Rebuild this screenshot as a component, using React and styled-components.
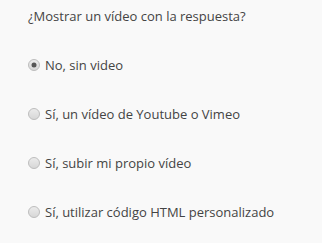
import React, { useState } from 'react'
import styled, { createGlobalStyle } from 'styled-components'

const Global = createGlobalStyle`
  html, body {
    margin: 0;
    padding: 0;
    background: #f9f9f9;
  }
  body {
    font-family: "Open Sans", "Liberation Sans", sans-serif;
  }
`

const Panel = styled.div`
  width: 322px;
  height: 243px;
  box-sizing: border-box;
  padding: 7px 0 0 28px;
  background: #f9f9f9;
  color: #444;
  font-size: 13px;
`

const Question = styled.div`
  line-height: 18px;
  height: 18px;
`

const Options = styled.div`
  display: flex;
  flex-direction: column;
  gap: 31px;
  margin-top: 31px;
`

const Option = styled.label`
  display: flex;
  align-items: center;
  gap: 5px;
  height: 18px;
  line-height: 18px;
  cursor: pointer;
`

const Radio = ({ checked }) => (
  <svg width="12" height="12" viewBox="0 0 12 12" style={{ flex: 'none', marginTop: '-1px' }}>
    <defs>
      <linearGradient id="rg" x1="0" y1="0" x2="0" y2="1">
        <stop offset="0" stopColor="#ececec" />
        <stop offset="1" stopColor="#d6d6d6" />
      </linearGradient>
    </defs>
    <circle cx="6" cy="6" r="5.5" fill="url(#rg)" stroke="#bdbdbd" strokeWidth="1" />
    {checked && <circle cx="6" cy="6" r="2.5" fill="#555" />}
  </svg>
)

const options = [
  'No, sin video',
  'Sí, un vídeo de Youtube o Vimeo',
  'Sí, subir mi propio vídeo',
  'Sí, utilizar código HTML personalizado',
]

export default function App() {
  const [sel, setSel] = useState(0)
  return (
    <Panel>
      <Global />
      <Question>¿Mostrar un vídeo con la respuesta?</Question>
      <Options>
        {options.map((o, i) => (
          <Option key={i} onClick={() => setSel(i)}>
            <Radio checked={sel === i} />
            <span>{o}</span>
          </Option>
        ))}
      </Options>
    </Panel>
  )
}
